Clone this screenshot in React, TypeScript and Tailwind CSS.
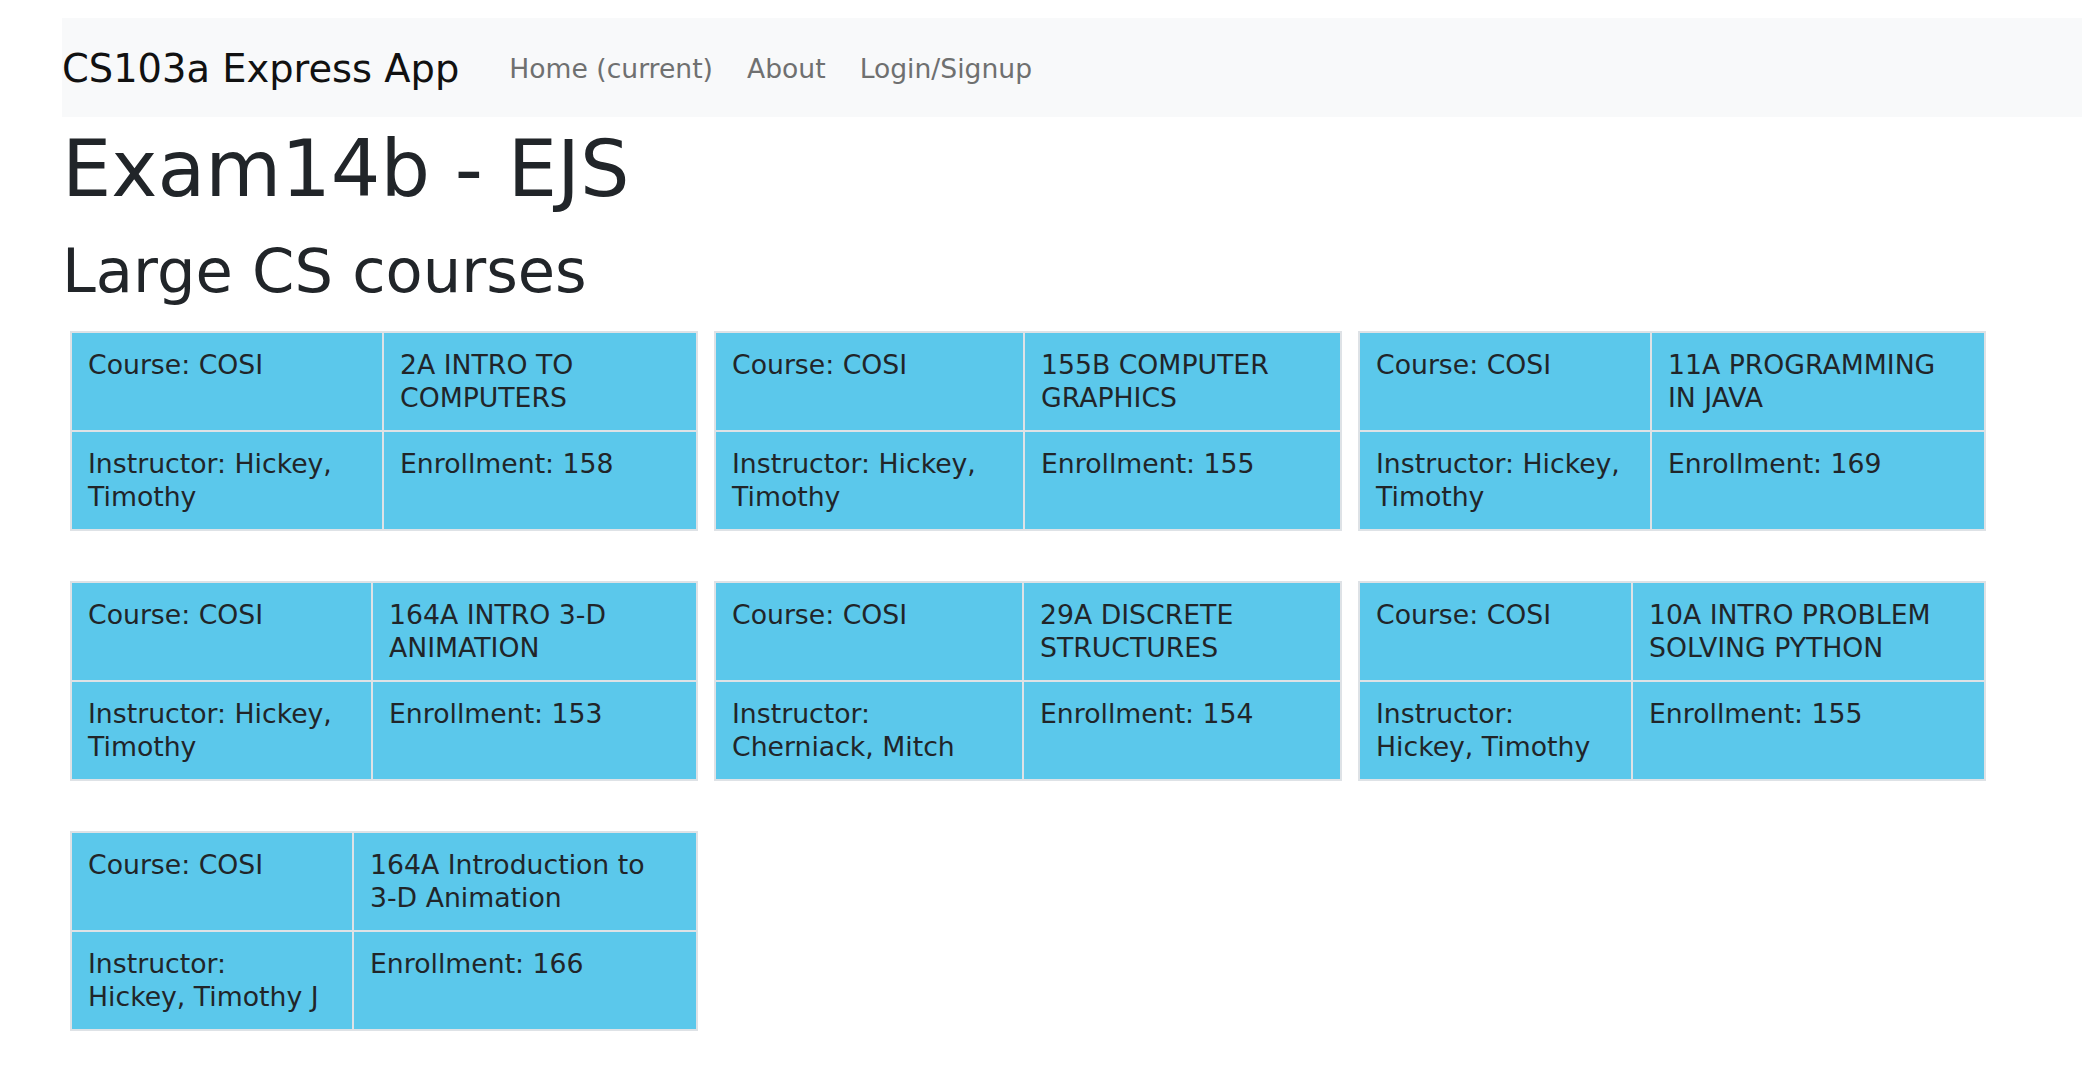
import React from "react";

type Card = {
  c1: string;
  title: string[];
  instr: string[];
  enroll: string;
  col: string;
};

const rows: Card[][] = [
  [
    { c1: "Course: COSI", title: ["2A INTRO TO", "COMPUTERS"], instr: ["Instructor: Hickey,", "Timothy"], enroll: "Enrollment: 158", col: "grid-cols-[310px_1fr]" },
    { c1: "Course: COSI", title: ["155B COMPUTER", "GRAPHICS"], instr: ["Instructor: Hickey,", "Timothy"], enroll: "Enrollment: 155", col: "grid-cols-[307px_1fr]" },
    { c1: "Course: COSI", title: ["11A PROGRAMMING", "IN JAVA"], instr: ["Instructor: Hickey,", "Timothy"], enroll: "Enrollment: 169", col: "grid-cols-[290px_1fr]" },
  ],
  [
    { c1: "Course: COSI", title: ["164A INTRO 3-D", "ANIMATION"], instr: ["Instructor: Hickey,", "Timothy"], enroll: "Enrollment: 153", col: "grid-cols-[299px_1fr]" },
    { c1: "Course: COSI", title: ["29A DISCRETE", "STRUCTURES"], instr: ["Instructor:", "Cherniack, Mitch"], enroll: "Enrollment: 154", col: "grid-cols-[306px_1fr]" },
    { c1: "Course: COSI", title: ["10A INTRO PROBLEM", "SOLVING PYTHON"], instr: ["Instructor:", "Hickey, Timothy"], enroll: "Enrollment: 155", col: "grid-cols-[271px_1fr]" },
  ],
  [
    { c1: "Course: COSI", title: ["164A Introduction to", "3-D Animation"], instr: ["Instructor:", "Hickey, Timothy J"], enroll: "Enrollment: 166", col: "grid-cols-[280px_1fr]" },
  ],
];

function Cell({ lines }: { lines: string[] }) {
  return (
    <div className="bg-[#5bc8eb] px-4 py-4 text-[26.7px] leading-[32.5px] text-[#212529]">
      {lines.map((l, i) => (
        <div key={i} className="whitespace-nowrap">
          {l}
        </div>
      ))}
    </div>
  );
}

function CourseCard({ card }: { card: Card }) {
  return (
    <div className={`grid ${card.col} gap-[2px] bg-[#dee2e6] p-[2px]`}>
      <Cell lines={[card.c1]} />
      <Cell lines={card.title} />
      <Cell lines={card.instr} />
      <Cell lines={[card.enroll]} />
    </div>
  );
}

export default function App() {
  return (
    <div className="min-h-screen bg-white pl-[62px] font-['DejaVu_Sans',sans-serif] text-[#212529]">
      <nav className="mt-[18px] flex h-[99px] items-start bg-[#f8f9fa]">
        <a className="mt-[28px] text-[38.4px] leading-[46px] text-[#111111]">CS103a Express App</a>
        <ul className="ml-[33px] mt-[35px] flex">
          <li className="px-[17px] text-[26.6px] leading-[32px] text-[#6f7070]">Home (current)</li>
          <li className="px-[17px] text-[26.6px] leading-[32px] text-[#6f7070]">About</li>
          <li className="px-[17px] text-[26.6px] leading-[32px] text-[#6f7070]">Login/Signup</li>
        </ul>
      </nav>
      <h1 className="mt-[5px] text-[78px] leading-[94px] text-[#212529]">Exam14b - EJS</h1>
      <h3 className="mt-[19px] text-[60.7px] leading-[73px] text-[#212529]">Large CS courses</h3>
      <div className="mt-[23px] flex flex-col gap-[50px]">
        {rows.map((row, ri) => (
          <div key={ri} className="grid grid-cols-[repeat(3,644px)]">
            {row.map((card, ci) => (
              <div key={ci} className="px-2">
                <CourseCard card={card} />
              </div>
            ))}
          </div>
        ))}
      </div>
    </div>
  );
}
